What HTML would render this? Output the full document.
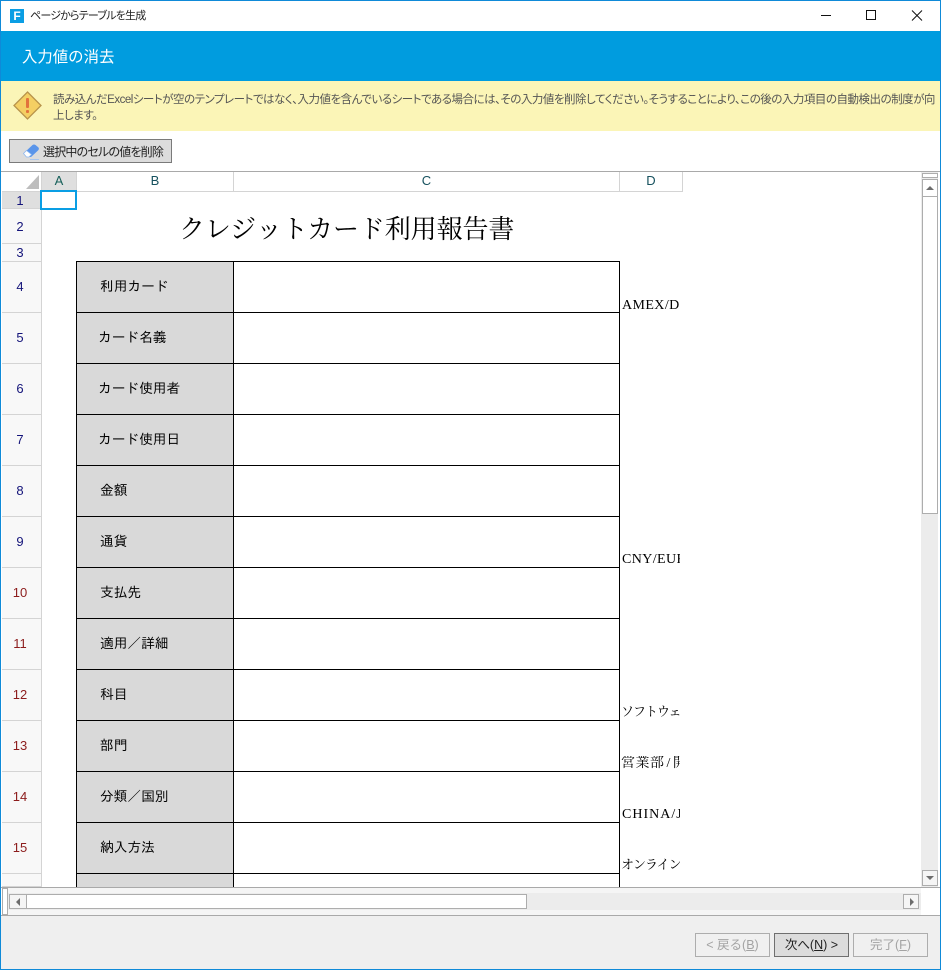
<!DOCTYPE html>
<html lang="ja"><head><meta charset="utf-8"><title>ページからテーブルを生成</title>
<style>
html,body{margin:0;padding:0}
body{width:941px;height:970px;position:relative;overflow:hidden;background:#fff;font-family:"Liberation Sans","Noto Sans CJK JP",sans-serif;color:#000}
.a{position:absolute;box-sizing:border-box}
.t{position:absolute;white-space:nowrap;line-height:1}
.p{font-feature-settings:"palt" 1}
.rh{position:absolute;left:2px;width:40px;background:#f8f8f8;border-right:1px solid #d4d4d4;border-bottom:1px solid #d4d4d4;box-sizing:border-box;text-align:center;font-size:13px;font-family:"Liberation Sans",sans-serif;display:flex;align-items:center;justify-content:center;padding:0 3px 2px 0}
.ch{position:absolute;top:172px;height:20px;background:#fff;border-right:1px solid #d4d4d4;border-bottom:1px solid #d4d4d4;box-sizing:border-box;text-align:center;font-size:13px;line-height:18px}
.lb{position:absolute;left:77px;width:156px;height:50px;background:#d9d9d9;font-family:"IPAGothic","Noto Sans CJK JP",sans-serif;font-size:13.700px;line-height:48px;padding-left:23px;box-sizing:border-box;white-space:nowrap}
.hl{position:absolute;left:76px;width:544px;height:1px;background:#000}
.d{position:absolute;left:622px;width:58px;overflow:hidden;white-space:nowrap;font-family:"Liberation Serif","Noto Serif CJK SC",serif;font-size:14px;line-height:16px;letter-spacing:.4px}
.k{left:621px;width:59px;font-size:13px;letter-spacing:-1px}
.btn{position:absolute;top:933px;height:24px;box-sizing:border-box;border:1px solid #adadad;background:#f0f0f0;font-size:12.500px;line-height:23px;text-align:center;color:#a3a3a3;font-family:"Liberation Sans","Noto Sans CJK JP",sans-serif}
</style></head><body>

<!-- title bar -->
<div class="a" style="left:10px;top:9px;width:14px;height:14px;background:#0a9ee4;color:#fff;font:bold 12px/14px 'Liberation Sans',sans-serif;text-align:center">F</div>
<div class="t p" style="left:30px;top:11px;font-size:11px;letter-spacing:-.8px;color:#222">ページからテーブルを生成</div>
<svg class="a" style="left:815px;top:5px" width="126" height="22" fill="none" stroke="#111" stroke-width="1">
<path d="M6 10.500H16"/><rect x="51.500" y="5.500" width="9" height="9"/><path d="M97 5.500L107 15.500M107 5.500L97 15.500"/></svg>

<!-- header -->
<div class="a" style="left:0;top:31px;width:941px;height:50px;background:#009cdf"></div>
<div class="t" style="left:22px;top:50px;font-size:15.400px;color:#fff">入力値の消去</div>

<!-- warning -->
<div class="a" style="left:0;top:81px;width:941px;height:50px;background:#fbf5b7"></div>
<svg class="a" style="left:13px;top:91px" width="30" height="30"><path d="M14.500 1L28 14.500L14.500 28L1 14.500Z" fill="#f4cf63" stroke="#b8934a" stroke-width="1.300"/><rect x="13" y="7" width="3" height="10" rx="1" fill="#e2733c"/><rect x="13" y="19" width="3" height="3" rx="1" fill="#e2733c"/></svg>
<div class="t p" style="left:53px;top:92px;font-size:11.500px;letter-spacing:-.49px;line-height:16px;color:#555">読み込んだExcelシートが空のテンプレートではなく、入力値を含んでいるシートである場合には、その入力値を削除してください。そうすることにより、この後の入力項目の自動検出の制度が向<br>上します。</div>

<!-- toolbar button -->
<div class="a" style="left:9px;top:139px;width:163px;height:24px;background:#dcdcdc;border:1px solid #7a7a7a"></div>
<svg class="a" style="left:22px;top:141px" width="18" height="20"><path d="M1.500 12.500L10.500 4Q12 3 13.500 4L16.500 6.500Q17.500 8 16 9.500L9 16L5 16Z" fill="#5a95ea"/><path d="M1.500 12.500L4.500 9.500L9.500 13.500L7 16H4.500Z" fill="#fff" stroke="#8fb8ee" stroke-width=".8"/><path d="M8 18.500H17" stroke="#a9c6ee" stroke-width="1"/></svg>
<div class="t p" style="left:43px;top:146px;font-size:12px;letter-spacing:-.8px;color:#222">選択中のセルの値を削除</div>

<!-- grid area -->
<div class="a" style="left:0;top:171px;width:941px;height:1px;background:#a9a9a9"></div>
<div class="a" style="left:2px;top:172px;width:40px;height:20px;background:#fff;border-right:1px solid #d4d4d4;border-bottom:1px solid #d4d4d4"></div>
<svg class="a" style="left:26px;top:175px" width="13" height="14"><path d="M13 0V14H0Z" fill="#bdbdbd"/></svg>
<div class="ch" style="left:42px;width:35px;background:#dfdfdf;color:#17605a">A</div>
<div class="ch" style="left:77px;width:157px;color:#16515e">B</div>
<div class="ch" style="left:234px;width:386px;color:#16515e">C</div>
<div class="ch" style="left:620px;width:63px;color:#16515e">D</div>

<div class="rh" style="top:192px;height:17px;background:#dfdfdf;color:#14147a;padding-bottom:0">1</div>
<div class="rh" style="top:209px;height:35px;color:#14147a;padding-bottom:0">2</div>
<div class="rh" style="top:244px;height:18px;color:#14147a;padding-bottom:0">3</div>
<div class="rh" style="top:262px;height:51px;color:#14147a">4</div>
<div class="rh" style="top:313px;height:51px;color:#14147a">5</div>
<div class="rh" style="top:364px;height:51px;color:#14147a">6</div>
<div class="rh" style="top:415px;height:51px;color:#14147a">7</div>
<div class="rh" style="top:466px;height:51px;color:#14147a">8</div>
<div class="rh" style="top:517px;height:51px;color:#14147a">9</div>
<div class="rh" style="top:568px;height:51px;color:#8c1c1c">10</div>
<div class="rh" style="top:619px;height:51px;color:#8c1c1c">11</div>
<div class="rh" style="top:670px;height:51px;color:#8c1c1c">12</div>
<div class="rh" style="top:721px;height:51px;color:#8c1c1c">13</div>
<div class="rh" style="top:772px;height:51px;color:#8c1c1c">14</div>
<div class="rh" style="top:823px;height:51px;color:#8c1c1c">15</div>
<div class="rh" style="top:874px;height:13px"></div>

<div class="a" style="left:40px;top:190px;width:37px;height:20px;border:2px solid #0a9ee4"></div>

<div class="t" style="left:179px;top:212px;font-family:'Noto Serif CJK SC','Noto Serif CJK JP',serif;font-size:26px;line-height:32px;letter-spacing:-.1px">クレジットカード利用報告書</div>

<!-- table -->
<div class="lb" style="top:262px">利用カード</div>
<div class="lb" style="top:313px;padding-left:21px">カード名義</div>
<div class="lb" style="top:364px;padding-left:21px">カード使用者</div>
<div class="lb" style="top:415px;padding-left:21px">カード使用日</div>
<div class="lb" style="top:466px">金額</div>
<div class="lb" style="top:517px">通貨</div>
<div class="lb" style="top:568px">支払先</div>
<div class="lb" style="top:619px">適用／詳細</div>
<div class="lb" style="top:670px">科目</div>
<div class="lb" style="top:721px">部門</div>
<div class="lb" style="top:772px">分類／国別</div>
<div class="lb" style="top:823px">納入方法</div>
<div class="lb" style="top:874px;height:13px"></div>
<div class="hl" style="top:261px"></div><div class="hl" style="top:312px"></div><div class="hl" style="top:363px"></div><div class="hl" style="top:414px"></div><div class="hl" style="top:465px"></div><div class="hl" style="top:516px"></div><div class="hl" style="top:567px"></div><div class="hl" style="top:618px"></div><div class="hl" style="top:669px"></div><div class="hl" style="top:720px"></div><div class="hl" style="top:771px"></div><div class="hl" style="top:822px"></div><div class="hl" style="top:873px"></div>
<div class="a" style="left:76px;top:261px;width:1px;height:626px;background:#000"></div>
<div class="a" style="left:233px;top:261px;width:1px;height:626px;background:#000"></div>
<div class="a" style="left:619px;top:261px;width:1px;height:626px;background:#000"></div>

<div class="d" style="top:298px">AMEX/D</div>
<div class="d" style="top:552px">CNY/EUR</div>
<div class="d k" style="top:704px">ソフトウェア</div>
<div class="d k" style="top:756px;font-size:14px;letter-spacing:.5px">営業部<span style="padding:0 2px">/</span>開発</div>
<div class="d" style="top:807px;letter-spacing:1px">CHINA/JP</div>
<div class="d k" style="top:857px">オンライン</div>

<!-- vertical scrollbar -->
<div class="a" style="left:921px;top:172px;width:20px;height:715px;background:#ececec"></div>
<div class="a" style="left:922px;top:173px;width:16px;height:5px;background:#fff;border:1px solid #adadad"></div>
<div class="a" style="left:922px;top:179px;width:16px;height:335px;background:#fff;border:1px solid #adadad"></div>
<div class="a" style="left:922px;top:179px;width:16px;height:18px;background:#fff;border:1px solid #adadad"></div>
<svg class="a" style="left:925px;top:185px" width="10" height="6"><path d="M5 1L9 5H1Z" fill="#6d6d6d"/></svg>
<div class="a" style="left:922px;top:870px;width:16px;height:16px;background:#f5f5f5;border:1px solid #adadad"></div>
<svg class="a" style="left:925px;top:875px" width="10" height="6"><path d="M1 1H9L5 5Z" fill="#6d6d6d"/></svg>
<div class="a" style="left:938px;top:172px;width:3px;height:743px;background:#fff"></div>

<!-- horizontal scrollbar -->
<div class="a" style="left:0;top:887px;width:941px;height:1px;background:#a9a9a9"></div>
<div class="a" style="left:2px;top:888px;width:919px;height:27px;background:#f5f5f5"></div>
<div class="a" style="left:2px;top:893px;width:919px;height:17px;background:#ececec"></div>
<div class="a" style="left:921px;top:888px;width:20px;height:27px;background:#fff"></div>
<div class="a" style="left:2px;top:888px;width:6px;height:27px;background:#fff;border:1px solid #adadad"></div>
<div class="a" style="left:9px;top:894px;width:518px;height:15px;background:#fff;border:1px solid #adadad"></div>
<div class="a" style="left:9px;top:894px;width:18px;height:15px;background:#f5f5f5;border:1px solid #adadad"></div>
<svg class="a" style="left:14px;top:897px" width="8" height="10"><path d="M6 1V9L2 5Z" fill="#6d6d6d"/></svg>
<div class="a" style="left:903px;top:894px;width:16px;height:15px;background:#f5f5f5;border:1px solid #adadad"></div>
<svg class="a" style="left:908px;top:897px" width="8" height="10"><path d="M2 1V9L6 5Z" fill="#6d6d6d"/></svg>

<!-- footer -->
<div class="a" style="left:0;top:915px;width:941px;height:55px;background:#efefef;border-top:1px solid #a9a9a9"></div>
<div class="btn" style="left:695px;width:75px">&lt; 戻る(<u>B</u>)</div>
<div class="btn" style="left:774px;width:75px;background:#dcdcdc;border-color:#6f6f6f;color:#222">次へ(<u>N</u>) &gt;</div>
<div class="btn" style="left:853px;width:75px">完了(<u>F</u>)</div>

<!-- window border -->
<div class="a" style="left:0;top:0;width:941px;height:970px;border:1px solid #0f8ad8;pointer-events:none"></div>
</body></html>
